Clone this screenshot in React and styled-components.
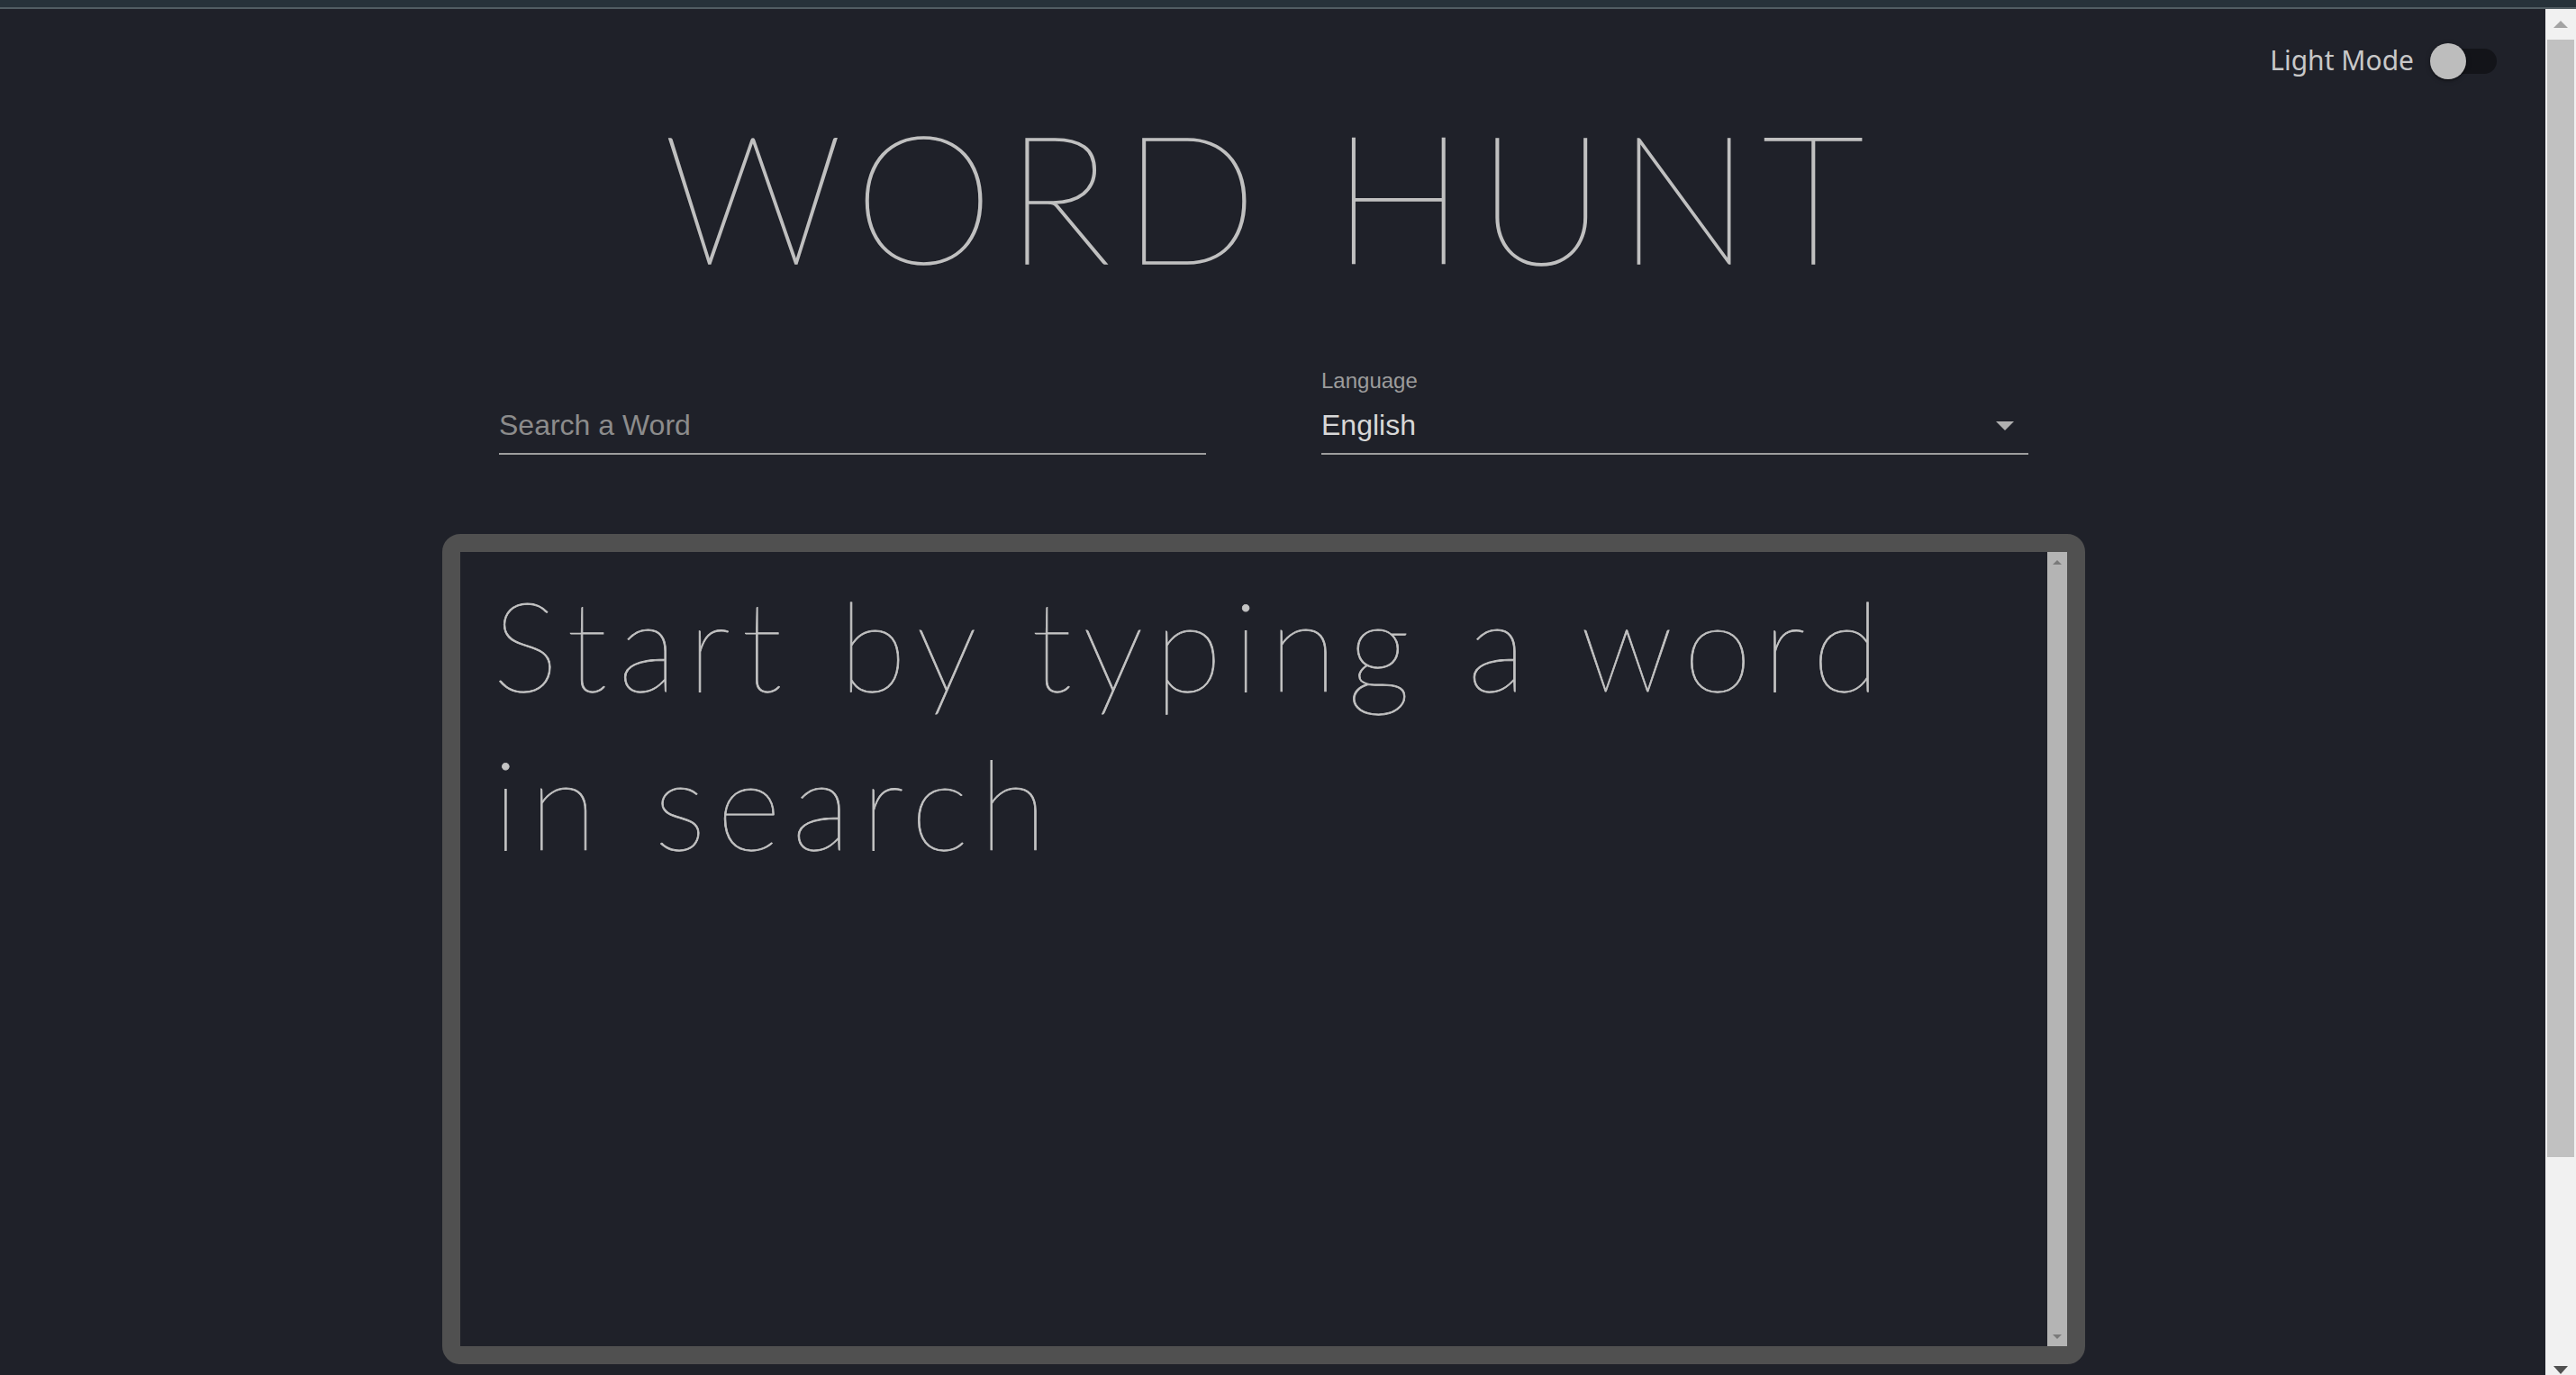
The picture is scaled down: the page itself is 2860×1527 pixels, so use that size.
import styled, { createGlobalStyle } from "styled-components";

const GlobalStyle = createGlobalStyle`
  html, body {
    margin: 0;
    height: 100%;
    overflow: hidden;
    background: #1f2129;
  }
  #root {
    height: 100%;
  }
`;

export default function App() {
  return (
    <>
      <GlobalStyle />
      <Window>
        <WindowBar />
        <Body>
          <Viewport>
            <ModeRow>
              <ModeToggle>
                <ModeLabel>Light Mode</ModeLabel>
                <SwitchRoot>
                  <SwitchTrack />
                  <SwitchThumb />
                </SwitchRoot>
              </ModeToggle>
            </ModeRow>
            <Container>
              <Title>WORD HUNT</Title>
              <SearchRow>
                <Field>
                  <FieldLabel />
                  <FieldInput placeholder="Search a Word" />
                </Field>
                <Field>
                  <FieldLabel>Language</FieldLabel>
                  <SelectBox>
                    <span>English</span>
                    <DropIcon viewBox="0 0 24 24">
                      <path d="M7 10l5 5 5-5z" />
                    </DropIcon>
                  </SelectBox>
                </Field>
              </SearchRow>
              <ResultFrame>
                <ResultScroll>
                  <Placeholder>Start by typing a word in search</Placeholder>
                </ResultScroll>
                <InnerRail>
                  <InnerButton>
                    <Arrow $dir="up" $w={10} $h={5} $color="#7a7a7a" />
                  </InnerButton>
                  <InnerButton>
                    <Arrow $dir="down" $w={10} $h={5} $color="#7a7a7a" />
                  </InnerButton>
                </InnerRail>
              </ResultFrame>
            </Container>
          </Viewport>
          <PageRail>
            <RailButton>
              <Arrow $dir="up" $w={16} $h={8} $color="#a3a3a3" />
            </RailButton>
            <RailThumb />
            <RailButton $bottom>
              <Arrow $dir="down" $w={16} $h={9} $color="#505050" />
            </RailButton>
          </PageRail>
        </Body>
      </Window>
    </>
  );
}

const Window = styled.div`
  display: flex;
  flex-direction: column;
  height: 100vh;
`;

const WindowBar = styled.div`
  flex: 0 0 8px;
  background: #27323a;
  border-bottom: 2px solid #525d63;
`;

const Body = styled.div`
  flex: 1;
  display: flex;
  min-height: 0;
`;

const Viewport = styled.div`
  flex: 1;
  overflow-y: auto;
  background: #1f2129;
  font-family: "Liberation Sans", Arial, sans-serif;
`;

const PageRail = styled.div`
  flex: 0 0 34px;
  display: flex;
  flex-direction: column;
  justify-content: space-between;
  background: #f1f1f1;
`;

const RailButton = styled.div`
  height: 34px;
  display: flex;
  justify-content: center;
  align-items: ${(p) => (p.$bottom ? "flex-end" : "center")};
  padding-bottom: ${(p) => (p.$bottom ? "1px" : "0")};
  box-sizing: border-box;
`;

const RailThumb = styled.div`
  height: 1241px;
  margin: 0 2px;
  background: #c1c1c1;
  margin-bottom: auto;
`;

const Arrow = styled.span`
  width: 0;
  height: 0;
  border-left: ${(p) => p.$w / 2}px solid transparent;
  border-right: ${(p) => p.$w / 2}px solid transparent;
  ${(p) =>
    p.$dir === "up"
      ? `border-bottom: ${p.$h}px solid ${p.$color};`
      : `border-top: ${p.$h}px solid ${p.$color};`}
`;

const ModeRow = styled.div`
  display: flex;
  justify-content: flex-end;
  padding: 20px 30px 0 0;
`;

const ModeToggle = styled.label`
  display: flex;
  align-items: center;
  height: 76px;
`;

const ModeLabel = styled.span`
  font-family: "Noto Sans", "Open Sans", sans-serif;
  font-size: 30px;
  color: #c8c8c8;
  margin-top: -3px;
`;

const SwitchRoot = styled.span`
  position: relative;
  display: inline-flex;
  box-sizing: border-box;
  width: 116px;
  height: 76px;
  padding: 24px;
`;

const SwitchTrack = styled.span`
  width: 100%;
  height: 100%;
  border-radius: 14px;
  background: #131419;
`;

const SwitchThumb = styled.span`
  position: absolute;
  top: 18px;
  left: 18px;
  width: 40px;
  height: 40px;
  border-radius: 50%;
  background: #bdbdbd;
  box-shadow: 0 2px 2px rgba(0, 0, 0, 0.3), 0 1px 6px rgba(0, 0, 0, 0.2);
`;

const Container = styled.div`
  width: 1824px;
  margin: 0 auto;
  padding: 0 20px 0 0;
`;

const Title = styled.h1`
  margin: 12px 0 0;
  font-family: Lato, "Open Sans", sans-serif;
  font-weight: 200;
  font-size: 198px;
  line-height: 198px;
  letter-spacing: 13px;
  text-indent: 13px;
  text-align: center;
  color: #c0c0c0;
  -webkit-text-stroke: 1.6px #c0c0c0;
`;

const SearchRow = styled.div`
  display: grid;
  grid-template-columns: 1fr 1fr;
  gap: 128px;
  margin-top: 95px;
  padding: 0 63px;
`;

const Field = styled.div`
  display: flex;
  flex-direction: column;
`;

const FieldLabel = styled.div`
  height: 24px;
  font-size: 24px;
  line-height: 24px;
  color: #9c9c9c;
`;

const underline = `
  margin-top: 17px;
  box-sizing: content-box;
  height: 40px;
  padding: 0 0 11px;
  border: 0;
  border-bottom: 2px solid #9e9e9e;
  font-family: "Liberation Sans", Arial, sans-serif;
  font-size: 32px;
  line-height: 40px;
`;

const FieldInput = styled.input`
  ${underline}
  width: 100%;
  background: transparent;
  color: #d8d8d8;
  outline: none;

  &::placeholder {
    color: #8c8c8c;
    opacity: 1;
  }
`;

const SelectBox = styled.div`
  ${underline}
  display: flex;
  align-items: center;
  justify-content: space-between;
  color: #d8d8d8;
`;

const DropIcon = styled.svg`
  width: 48px;
  height: 48px;
  margin-right: 2px;
  fill: #b0b0b0;
`;

const ResultFrame = styled.div`
  box-sizing: border-box;
  height: 922px;
  margin-top: 88px;
  border: 20px solid #505050;
  border-radius: 20px;
  display: flex;
`;

const ResultScroll = styled.div`
  flex: 1;
  overflow-y: auto;
  padding: 14px 36px;
`;

const InnerRail = styled.div`
  flex: 0 0 22px;
  display: flex;
  flex-direction: column;
  justify-content: space-between;
  background: #b4b4b4;
`;

const InnerButton = styled.div`
  height: 22px;
  display: flex;
  align-items: center;
  justify-content: center;
`;

const Placeholder = styled.div`
  max-width: 1580px;
  font-family: Lato, "Open Sans", sans-serif;
  font-weight: 200;
  font-size: 138px;
  line-height: 176px;
  letter-spacing: 12px;
  color: #c4c4c4;
  -webkit-text-stroke: 0.8px #c4c4c4;
`;
